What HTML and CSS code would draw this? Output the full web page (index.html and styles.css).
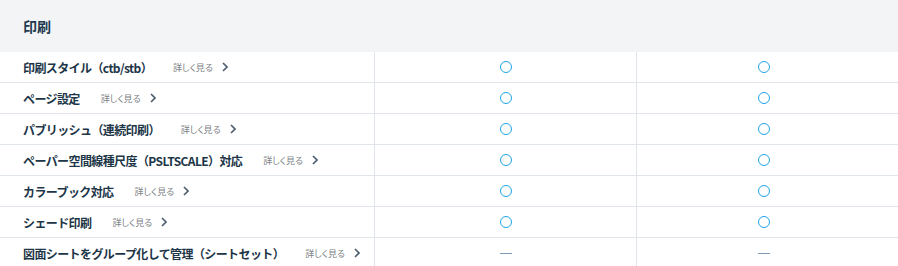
FILE: index.html
```html
<!DOCTYPE html>
<html lang="ja">
<head>
<meta charset="utf-8">
<link rel="stylesheet" href="styles.css">
</head>
<body>
<section class="spec">
  <h2 class="spec-title">印刷</h2>
  <div class="spec-rows">
    <div class="row">
      <div class="label"><span class="name">印刷スタイル（ctb/stb）</span><a class="more">詳しく見る<svg class="chev" viewBox="0 0 6 10"><path d="M1 1l4 4-4 4"/></svg></a></div>
      <div class="cell"><span class="yes"></span></div>
      <div class="cell"><span class="yes"></span></div>
    </div>
    <div class="row">
      <div class="label"><span class="name">ページ設定</span><a class="more">詳しく見る<svg class="chev" viewBox="0 0 6 10"><path d="M1 1l4 4-4 4"/></svg></a></div>
      <div class="cell"><span class="yes"></span></div>
      <div class="cell"><span class="yes"></span></div>
    </div>
    <div class="row">
      <div class="label"><span class="name">パブリッシュ（連続印刷）</span><a class="more">詳しく見る<svg class="chev" viewBox="0 0 6 10"><path d="M1 1l4 4-4 4"/></svg></a></div>
      <div class="cell"><span class="yes"></span></div>
      <div class="cell"><span class="yes"></span></div>
    </div>
    <div class="row">
      <div class="label"><span class="name">ペーパー空間線種尺度（PSLTSCALE）対応</span><a class="more">詳しく見る<svg class="chev" viewBox="0 0 6 10"><path d="M1 1l4 4-4 4"/></svg></a></div>
      <div class="cell"><span class="yes"></span></div>
      <div class="cell"><span class="yes"></span></div>
    </div>
    <div class="row">
      <div class="label"><span class="name">カラーブック対応</span><a class="more">詳しく見る<svg class="chev" viewBox="0 0 6 10"><path d="M1 1l4 4-4 4"/></svg></a></div>
      <div class="cell"><span class="yes"></span></div>
      <div class="cell"><span class="yes"></span></div>
    </div>
    <div class="row">
      <div class="label"><span class="name">シェード印刷</span><a class="more">詳しく見る<svg class="chev" viewBox="0 0 6 10"><path d="M1 1l4 4-4 4"/></svg></a></div>
      <div class="cell"><span class="yes"></span></div>
      <div class="cell"><span class="yes"></span></div>
    </div>
    <div class="row">
      <div class="label"><span class="name">図面シートをグループ化して管理（シートセット）</span><a class="more">詳しく見る<svg class="chev" viewBox="0 0 6 10"><path d="M1 1l4 4-4 4"/></svg></a></div>
      <div class="cell"><span class="no"></span></div>
      <div class="cell"><span class="no"></span></div>
    </div>
  </div>
</section>
</body>
</html>
```

FILE: styles.css
```css
html, body {
  margin: 0;
  padding: 0;
  background: #ffffff;
}
body {
  font-family: "Noto Sans CJK JP", "Noto Sans", sans-serif;
  color: #1c3547;
}
.spec-title {
  margin: 0;
  height: 52px;
  padding-left: 23px;
  display: flex;
  align-items: center;
  background: #f3f4f6;
  font-size: 14px;
  font-weight: 700;
  color: #1d3a4e;
}
.row {
  display: grid;
  grid-template-columns: 374px 262px 254px;
  padding-right: 8px;
  height: 30px;
  border-bottom: 1px solid #dfe5ea;
}
.label {
  display: flex;
  align-items: center;
  padding-left: 23px;
}
.name {
  font-size: 12px;
  font-weight: 700;
  letter-spacing: -0.05em;
  color: #1c3547;
}
.more {
  display: inline-flex;
  align-items: center;
  margin-left: 21px;
  font-size: 9px;
  font-feature-settings: "palt";
  color: #7c7f85;
  text-decoration: none;
}
.chev {
  width: 6px;
  height: 10px;
  margin-left: 9px;
  fill: none;
  stroke: #4d5f70;
  stroke-width: 1.7;
}
.cell {
  border-left: 1px solid #dfe5ea;
  display: flex;
  align-items: center;
  justify-content: center;
}
.yes {
  width: 10px;
  height: 10px;
  border: 1.5px solid #1ea5e6;
  border-radius: 50%;
}
.no {
  width: 12px;
  height: 1px;
  background: #7f9bb4;
}
```
